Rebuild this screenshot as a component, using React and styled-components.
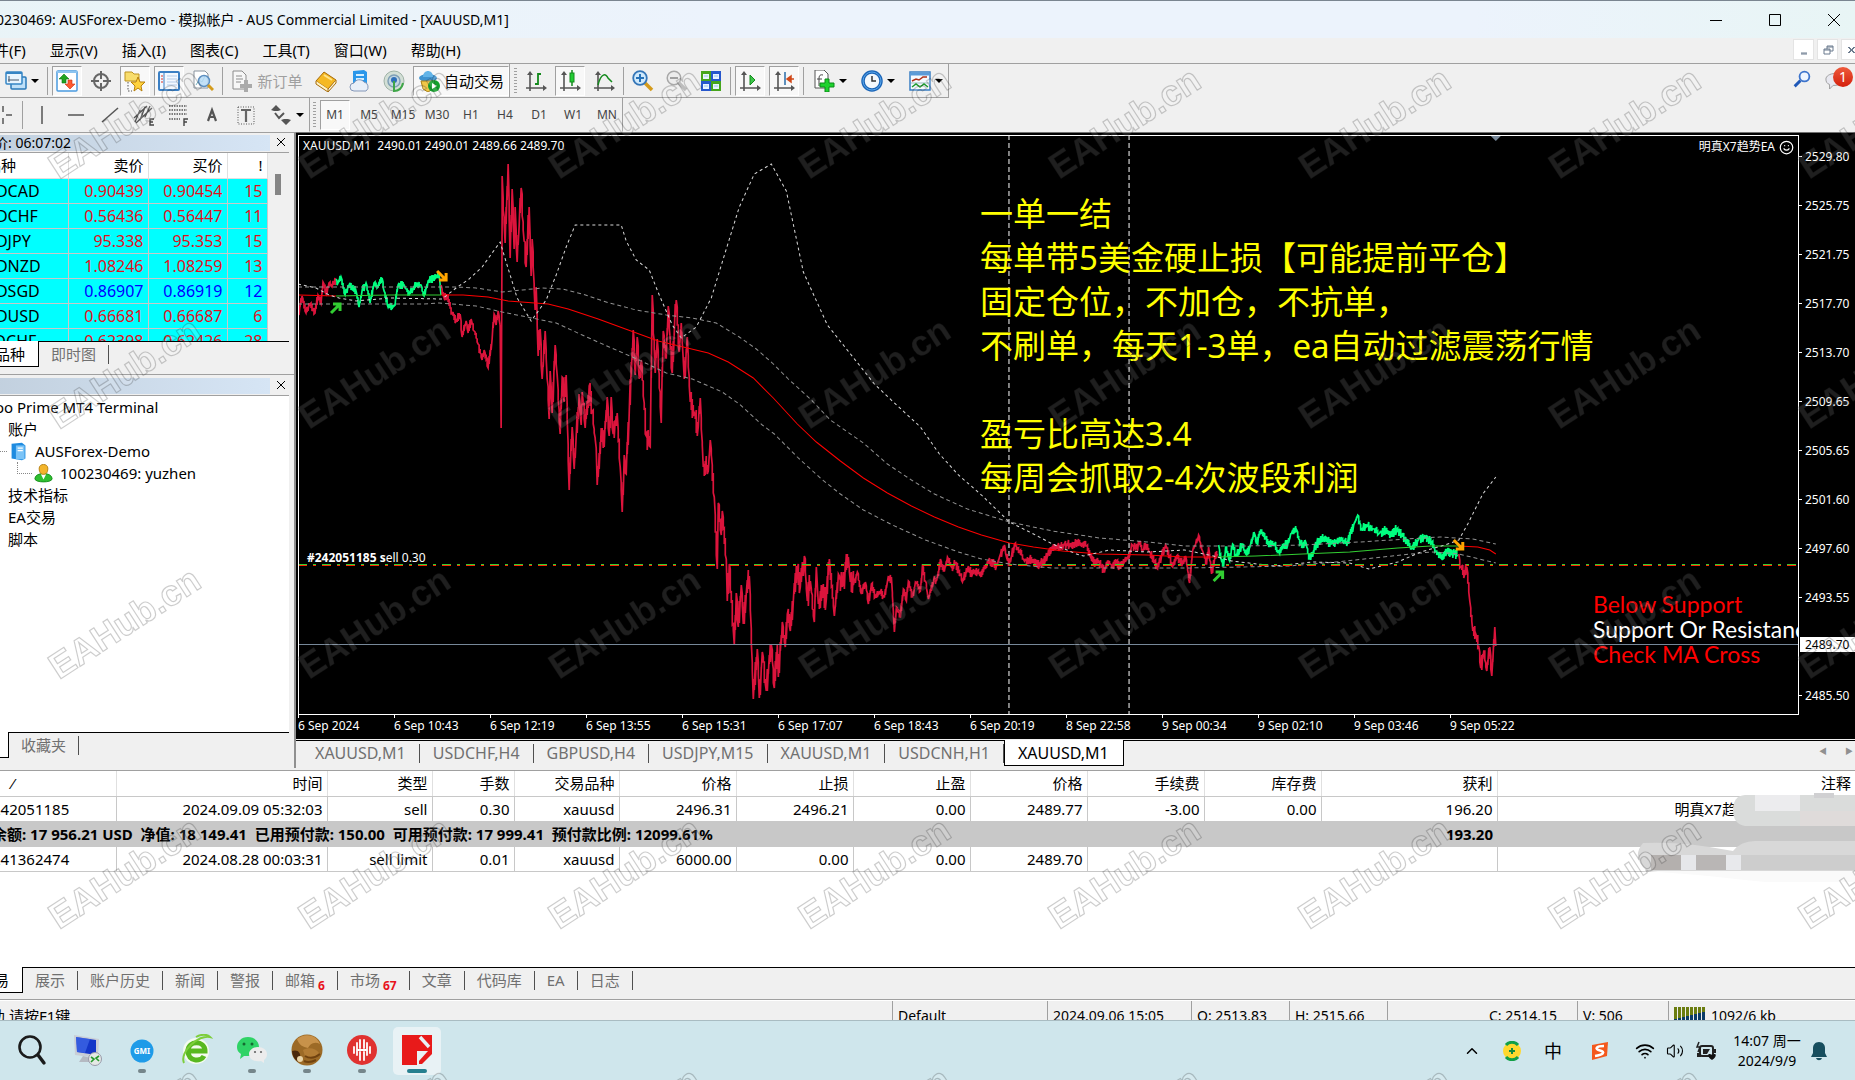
import * as React from "react";
import styled, { createGlobalStyle, css } from "styled-components";
import { Smile, Wifi, Volume2, ChevronUp } from "lucide-react";

const GlobalStyle = createGlobalStyle`
  * {
    box-sizing: border-box;
  }

  body {
    margin: 0;
    overflow: hidden;
    font-family: "Noto Sans", "Noto Sans CJK SC", sans-serif;
    font-size: 15px;
    line-height: 20px;
    color: #000;
  }

  button {
    font: inherit;
    color: inherit;
    border: 0;
    padding: 0;
    background: none;
  }
`;

const Desktop = styled.div`
  position: relative;
  display: flex;
  flex-direction: column;
  height: 100vh;
  overflow: hidden;
`;

/* the terminal window hangs over the left edge of the screen */
const Window = styled.div`
  display: flex;
  flex: 1;
  flex-direction: column;
  min-height: 0;
  margin-left: -48px;
  background: #f0f0f0;
`;

const TitleBar = styled.header`
  display: flex;
  align-items: center;
  justify-content: space-between;
  height: 38px;
  padding-left: 28px;
  border-top: 1px solid #7a8590;
  background: linear-gradient(90deg, #e9f4f7, #ecf3fc 40%, #ecf3fc 80%, #e8f5f5);
`;

const Title = styled.h1`
  margin: 0;
  font-size: 14px;
  font-weight: 400;
  white-space: nowrap;
`;

const WindowButtons = styled.div`
  display: flex;
  gap: 17px;

  & button {
    width: 42px;
    height: 36px;
  }

  & svg {
    display: block;
    margin: auto;
  }
`;

const MenuBar = styled.nav`
  display: flex;
  align-items: center;
  height: 26px;
  padding: 0 0 2px 15px;
  border-bottom: 1px solid #a0a0a0;
`;

const MenuItem = styled.button`
  padding: 0 12px;
  white-space: nowrap;
`;

const MdiButtons = styled.div`
  display: flex;
  gap: 3px;
  margin-left: auto;
  margin-right: -7px;

  & button {
    width: 21px;
    height: 21px;
    border: 1px solid #e4e4e4;
    background: #fff;
    color: #6b7b8e;
  }

  & svg {
    display: block;
    margin: auto;
  }
`;

const ToolRow = styled.div`
  display: flex;
  justify-content: space-between;
  height: 34px;
`;

const ToolGroup = styled.div`
  display: flex;
  align-items: center;
  gap: 4px;
  height: 34px;
  padding-left: ${(p) => p.$start ?? 0}px;
  border-right: 1px solid #a0a0a0;
  border-bottom: 1px solid ${(p) => (p.$underline ? "#a0a0a0" : "transparent")};
`;

const ToolGroups = styled.div`
  display: flex;
`;

const ToolButton = styled.button`
  display: flex;
  flex: none;
  align-items: center;
  justify-content: center;
  gap: 4px;
  width: ${(p) => p.$w ?? 30}px;
  height: 30px;
  white-space: nowrap;
  ${(p) =>
    p.$on &&
    css`
      border: 1px solid #a0a0a0;
      border-right-color: #fff;
      border-bottom-color: #fff;
      background: #f8f8f8;
    `}

  &:disabled {
    color: #a0a0a0;
  }
`;

const PeriodButton = styled(ToolButton)`
  font-size: 12px;
  color: #444;
`;

const Separator = styled.span`
  flex: none;
  width: 1px;
  height: 28px;
  background: #a0a0a0;
`;

const Grip = styled.span`
  flex: none;
  width: 3px;
  height: 26px;
  background: repeating-linear-gradient(#a0a0a0 0 1px, transparent 1px 3px);
`;

const Caret = styled.span`
  border: 4px solid transparent;
  border-top-color: #000;
  border-bottom: 0;
`;

const ToolRight = styled.div`
  display: flex;
  align-items: center;
  gap: 14px;
  padding-right: 10px;

  & button {
    position: relative;
    height: 24px;
  }
`;

const Badge = styled.span`
  position: absolute;
  left: 8px;
  top: -2px;
  width: 20px;
  height: 20px;
  border-radius: 50%;
  background: linear-gradient(#ee5a3c, #d4200c);
  color: #fff;
  font-size: 14px;
`;

const Workspace = styled.main`
  display: flex;
  flex: 1;
  min-height: 0;
`;

const Sidebar = styled.aside`
  display: flex;
  flex: none;
  flex-direction: column;
  width: 344px;
  padding: 2px 0 10px;
  border-top: 1px solid #a0a0a0;
  border-right: 2px solid #909090;
`;

const Panel = styled.section`
  display: flex;
  flex-direction: column;
  width: 337px;
  flex: ${(p) => (p.$grow ? "1" : "none")};
  min-height: 0;
`;

const PanelCaption = styled.h2`
  display: flex;
  justify-content: space-between;
  height: 18px;
  margin: 0;
  border-bottom: 1px solid #a0a0a0;
  font-size: 14px;
  font-weight: 400;
  line-height: 16px;

  & span {
    width: 318px;
    height: 16px;
    background: linear-gradient(90deg, #bfcddb, #d6e5f5);
  }

  & button {
    width: 16px;
  }
`;

const PanelDivider = styled.div`
  flex: none;
  height: 8px;
  border-bottom: 1px solid #a0a0a0;
  margin-bottom: 3px;
`;

const QuoteList = styled.div`
  display: flex;
  height: 188px;
  overflow: hidden;
`;

const QuoteTable = styled.table`
  width: 315px;
  table-layout: fixed;
  border-collapse: collapse;
  background: #fff;

  & th,
  & td {
    height: 25px;
    padding: 0 4px;
    border: 0 solid #c8c8c8;
    border-right-width: 1px;
    border-bottom-width: 1px;
    font-weight: 400;
    text-align: right;
    white-space: nowrap;
  }

  & td {
    font-size: 16px;
  }

  & th {
    border-color: #e0e0e0;
  }

  & th:first-child {
    text-align: left;
  }

  & td:first-child {
    padding-left: 22px;
    text-align: left;
    color: #000;
  }
`;

const QuoteRow = styled.tr`
  background: #00ffff;
  color: ${(p) => (p.$up ? "#0000ff" : "#e0101c")};
`;

const ScrollTrack = styled.div`
  flex: 1;
  padding: 21px 7px 0;
  background: #f0f0f0;

  &:before {
    content: "";
    display: block;
    width: 6px;
    height: 21px;
    background: #858585;
  }
`;

const TabStrip = styled.div`
  display: flex;
  flex: none;
  height: 26px;
  padding-left: ${(p) => p.$start ?? 0}px;
  border-top: ${(p) => (p.$double ? "3px double" : "1px solid")} #000;
`;

const Tab = styled.button`
  flex: none;
  height: 24px;
  padding: 0 13px 0 12px;
  color: #707070;
  line-height: 20px;
  white-space: nowrap;
  background: linear-gradient(#505050, #505050) right 3px / 1px 19px no-repeat;
  ${(p) =>
    p.$wide &&
    css`
      padding: 0 14px 0 13px;
      font-size: 16px;
    `}
  ${(p) =>
    p.$active &&
    css`
      margin-top: -1px;
      height: 26px;
      border: 1px solid #000;
      border-top: 0;
      background: #fff;
      color: #000;
    `}

  & sub {
    margin-left: 3px;
    color: #e8141c;
    font-size: 12px;
    font-weight: 700;
    line-height: 10px;
  }
`;

const Tree = styled.ul`
  flex: 1;
  margin: 0;
  padding: 0 0 0 32px;
  list-style: none;
  overflow: hidden;
  background: #fff;
`;

const TreeItem = styled.li`
  position: relative;
  display: flex;
  align-items: center;
  gap: ${(p) => (p.$depth ? 7 : 8)}px;
  height: 22px;
  padding-left: ${(p) => (p.$depth ?? 0) * 25}px;
  white-space: nowrap;
  ${(p) =>
    p.$depth &&
    css`
      &:before {
        content: "";
        position: absolute;
        left: ${(p.$depth - 1) * 25 + 8}px;
        top: 0;
        width: 14px;
        height: 11px;
        border: 1px dotted #888;
        border-width: 0 0 1px 1px;
      }
    `}
`;

const ChartColumn = styled.section`
  display: flex;
  flex: 1;
  flex-direction: column;
  min-width: 0;
`;

const ChartArea = styled.div`
  display: grid;
  flex: 1;
  grid-template-columns: minmax(0, 1fr) 56px;
  grid-template-rows: minmax(0, 1fr) 23px;
  min-height: 0;
  padding: 2px 0 0 2px;
  border-top: 1px solid #707070;
  background: #000;
  color: #fff;
  font-size: 12px;
`;

const Plot = styled.div`
  position: relative;
  border: 1px solid #fff;
  overflow: hidden;

  & > svg {
    display: block;
    width: 100%;
    height: 100%;
  }
`;

const PlotLabel = styled.div`
  position: absolute;
  display: flex;
  align-items: center;
  gap: 4px;
  line-height: 16px;
  white-space: pre;
`;

const OhlcLabel = styled(PlotLabel)`
  left: 4px;
  top: 2px;
`;

const ExpertLabel = styled(PlotLabel)`
  right: 4px;
  top: 3px;
`;

const OrderLabel = styled(PlotLabel)`
  left: 8px;
  top: 414px;
  gap: 0;
`;

const Notes = styled.div`
  position: absolute;
  left: 681px;
  top: 56px;
  color: #ffff00;
  font-size: 33px;
  line-height: 44px;
  white-space: pre;
`;

const Signals = styled.div`
  position: absolute;
  left: 1294px;
  top: 456px;
  font-family: Lato, sans-serif;
  font-size: 23px;
  line-height: 25px;
  color: #ff0000;
  white-space: nowrap;

  & p {
    margin: 0;
  }

  & p:nth-child(2) {
    color: #fff;
  }
`;

const PriceAxis = styled.div`
  overflow: hidden;
`;

const Price = styled.div`
  display: flex;
  align-items: center;
  height: 49px;

  &:first-child {
    height: 46px;
    padding-bottom: 3px;
  }

  &:before {
    content: "";
    width: 3px;
    height: 1px;
    margin-right: 3px;
    background: #fff;
  }
`;

const PriceNow = styled(Price)`
  align-items: flex-start;
  padding-top: 15px;

  &:before {
    display: none;
  }

  & span {
    width: 100%;
    margin-left: 1px;
    padding-left: 5px;
    background: #fff;
    color: #000;
    line-height: 15px;
  }
`;

const TimeAxis = styled.div`
  display: flex;
  grid-column: 1 / -1;
  overflow: hidden;
`;

const Time = styled.div`
  flex: none;
  width: 96px;
  line-height: 16px;
  white-space: nowrap;

  &:before {
    content: "";
    display: block;
    width: 1px;
    height: 3px;
    background: #fff;
  }
`;

const ChartTabs = styled.div`
  position: relative;
  height: 30px;
`;

const TabScroll = styled.div`
  position: absolute;
  right: 2px;
  top: 3px;
  display: flex;
  gap: 18px;
  color: #909090;
  font-size: 8px;
`;

const Terminal = styled.section`
  display: flex;
  flex: none;
  flex-direction: column;
  height: 232px;
  padding: 2px 0 6px;
  border-bottom: 1px solid #a0a0a0;
`;

const OrderArea = styled.div`
  position: relative;
  flex: 1;
  border-top: 1px solid #a0a0a0;
  background: #fff;
`;

const OrderTable = styled.table`
  width: 100%;
  table-layout: fixed;
  border-collapse: collapse;

  & th,
  & td {
    height: 25px;
    padding: 0 4px;
    border: 0 solid #c8c8c8;
    border-right-width: 1px;
    border-bottom-width: 1px;
    font-weight: 400;
    text-align: right;
    white-space: nowrap;
  }

  & th {
    border-right-color: #e0e0e0;
  }

  & th:first-child {
    padding-left: 18px;
    text-align: left;
    white-space: pre;
  }

  & td:first-child {
    padding-left: 40px;
    text-align: left;
  }

  & th:last-child,
  & td:last-child {
    border-right: 0;
  }
`;

const BalanceRow = styled.tr`
  background: #c8c8c8;

  & td {
    border-right: 0;
    font-weight: 700;
    white-space: pre;
  }
`;

const Redaction = styled.svg`
  position: absolute;
  right: 0;
  top: 21px;
`;

const StatusBar = styled.footer`
  display: flex;
  flex: none;
  height: 20px;
  border-top: 1px solid #fff;
  overflow: hidden;
  line-height: 30px;
`;

const StatusCell = styled.div`
  display: flex;
  flex: ${(p) => (p.$w ? "none" : "1")};
  width: ${(p) => p.$w}px;
  gap: 5px;
  justify-content: ${(p) => (p.$end ? "flex-end" : "flex-start")};
  padding: 0 ${(p) => (p.$end ? 20 : 5)}px;
  border-left: 1px solid #a0a0a0;
  font-size: 14px;
  white-space: nowrap;

  &:first-child {
    padding-left: 23px;
    border: 0;
    font-size: 15px;
  }
`;

const Taskbar = styled.nav`
  display: flex;
  flex: none;
  align-items: center;
  justify-content: space-between;
  height: 60px;
  padding: 0 26px 0 8px;
  border-top: 1px solid #a9bcc2;
  background: #cfe6ec;
`;

const AppList = styled.div`
  display: flex;
  gap: 7px;
`;

const AppButton = styled.button`
  display: flex;
  flex-direction: column;
  align-items: center;
  width: 48px;
  height: 48px;
  padding-top: 7px;
  border-radius: 5px;
  background: ${(p) => (p.$active ? "#e8f2f5" : "none")};

  &:after {
    content: "";
    width: ${(p) => (p.$active ? 20 : 8)}px;
    height: 4px;
    margin-top: 3px;
    border-radius: 2px;
    background: ${(p) => (p.$active ? "#26808f" : p.$running ? "#75868b" : "none")};
  }
`;

const Tray = styled.div`
  display: flex;
  align-items: center;
`;

const TrayButton = styled.button`
  display: flex;
  align-items: center;
  justify-content: center;
  width: ${(p) => p.$w ?? 30}px;
  height: 40px;
  font-size: 18px;
`;

const Clock = styled.div`
  width: 84px;
  font-size: 14px;
  line-height: 20px;
  text-align: center;
  white-space: nowrap;
`;

const Watermark = styled.svg`
  position: absolute;
  left: 0;
  top: 0;
  width: 100%;
  height: 100%;
  pointer-events: none;
`;

/* ---------- icons ---------- */

const Icon = ({ size = 22, children }) => (
  <svg width={size} height={size} viewBox="0 0 22 22" fill="none" aria-hidden="true">
    {children}
  </svg>
);

const Axes = ({ children }) => (
  <Icon>
    <path d="M5 3v18M1 18h18" stroke="#555" strokeWidth="1.6" />
    <path d="M2 5l3-4 3 4zM18 15l4 3-4 3z" fill="#555" />
    {children}
  </Icon>
);

const icons = {
  profiles: (
    <Icon>
      <rect x="6" y="7" width="15" height="12" rx="1" fill="#bfe0f8" stroke="#2a78b8" strokeWidth="1.5" />
      <rect x="1" y="2" width="16" height="12" rx="1" fill="#e8f5ff" stroke="#3585c5" strokeWidth="1.5" />
      <path d="M1 3h16" stroke="#3585c5" strokeWidth="2" />
      <path d="M4 6v6M3 10h11" stroke="#456" />
    </Icon>
  ),
  market: (
    <Icon>
      <rect x="1" y="1" width="20" height="20" rx="1" fill="#fff" stroke="#4a9be0" strokeWidth="1.5" />
      <path d="M1 2h20" stroke="#8cc4f0" strokeWidth="2" />
      <path d="M3 9l5-5 5 5h-3v4H6V9z" fill="#21a321" stroke="#0b7a12" strokeWidth=".6" />
      <path d="M9 14l5 5 5-5h-3v-4h-4v4z" fill="#ff5a30" stroke="#c83010" strokeWidth=".6" />
    </Icon>
  ),
  target: (
    <Icon>
      <circle cx="11" cy="11" r="7" stroke="#666" strokeWidth="2" />
      <path d="M11 1v8M11 13v8M1 11h8M13 11h8" stroke="#666" strokeWidth="2" />
    </Icon>
  ),
  navigator: (
    <Icon>
      <path d="M1 4V2h7l2 2h5v7H1z" fill="#f8dd6c" stroke="#bd9320" />
      <path d="M4 12v9h4" stroke="#555" strokeDasharray="1.5 1.5" />
      <path d="M14 7l2 5 5 0-4 4 1 5-4-3-4 3 1-5-4-4h5z" fill="#ffd23c" stroke="#b8800c" />
    </Icon>
  ),
  terminal: (
    <Icon>
      <rect x="1" y="2" width="20" height="18" rx="1" fill="#f2f8ff" stroke="#3a7fc4" strokeWidth="2" />
      <path d="M6 3v16" stroke="#3a7fc4" />
      <path d="M3 6h2M3 9h2M3 12h2" stroke="#e03020" />
      <path d="M9 6h10M9 9h10M9 12h10M9 15h10" stroke="#b4cbe8" />
    </Icon>
  ),
  tester: (
    <Icon>
      <path d="M2 1h11l3 3v14H2z" fill="#fff" stroke="#8a949e" />
      <path d="M4 15l3-5 3 2 3-6" stroke="#6ab" />
      <circle cx="12" cy="11" r="5.5" fill="#b9dcf6" fillOpacity=".85" stroke="#5d8fc0" strokeWidth="1.5" />
      <path d="M16 15l5 5" stroke="#d49b1c" strokeWidth="3" />
    </Icon>
  ),
  order: (
    <Icon>
      <path d="M2 1h9l4 4v14H2z" fill="#f7f7f7" stroke="#8c8c8c" />
      <path d="M5 6h6M5 9h7M5 12h5" stroke="#8c8c8c" />
      <path d="M13 10h4v4h4v4h-4v4h-4v-4H9v-4h4z" fill="#aaa" />
    </Icon>
  ),
  book: (
    <Icon>
      <path d="M9 2l12 8-8 9L1 11z" fill="#f5b923" stroke="#a66a08" />
      <path d="M1 11v3l12 8v-3M13 22l8-9v-3" fill="#fff3c4" stroke="#a66a08" />
      <path d="M9 5l8 5" stroke="#ffe48a" strokeWidth="2" />
    </Icon>
  ),
  cloud: (
    <Icon>
      <path d="M4 1l11-1 3 2v13H4z" fill="#2a97ea" />
      <path d="M7 4h8v2H7zM7 8h8v2H7z" fill="#d5efff" />
      <path d="M5 21a4 4 0 010-8 6 6 0 0110-1 5 5 0 012 9z" fill="#e9eff8" stroke="#8497b8" />
    </Icon>
  ),
  signal: (
    <Icon>
      <circle cx="11" cy="11" r="10" fill="#d3dfd6" stroke="#9fb2a6" />
      <circle cx="11" cy="11" r="6" fill="#c2d6e2" stroke="#7f9fb5" strokeWidth="1.5" />
      <circle cx="11" cy="10" r="3" fill="#2f6fb8" />
      <path d="M11 11v10c5 0 8-3 9-8" stroke="#3fa648" strokeWidth="2" />
    </Icon>
  ),
  expert: (
    <Icon>
      <ellipse cx="10" cy="8" rx="9" ry="4" fill="#3f93d0" />
      <path d="M5 7c0-8 10-8 10 0z" fill="#62b4e8" />
      <path d="M3 11h14l-2 8-5 3-5-3z" fill="#f0c748" stroke="#a88018" />
      <circle cx="16" cy="16" r="6" fill="#13a02c" />
      <path d="M14 13l5 3-5 3z" fill="#fff" />
    </Icon>
  ),
  bars: (
    <Axes>
      <path d="M13 3v12M13 4h3M10 14h3" stroke="#138a1c" strokeWidth="1.8" />
    </Axes>
  ),
  candles: (
    <Axes>
      <path d="M13 0v16" stroke="#138a1c" strokeWidth="1.5" />
      <rect x="11" y="3" width="4" height="9" fill="#22cc33" stroke="#138a1c" />
    </Axes>
  ),
  line: (
    <Axes>
      <path d="M5 15C8 3 13 3 15 8l4 4" stroke="#138a1c" strokeWidth="1.5" />
    </Axes>
  ),
  zoomIn: (
    <Icon>
      <path d="M13 13l7 7" stroke="#d49b1c" strokeWidth="3.5" />
      <circle cx="8" cy="8" r="6.8" fill="#cfe9fc" stroke="#3476b8" strokeWidth="1.8" />
      <path d="M4 8h8M8 4v8" stroke="#2672b8" strokeWidth="2" />
    </Icon>
  ),
  zoomOut: (
    <Icon>
      <path d="M13 13l7 7" stroke="#b4b4b4" strokeWidth="3.5" />
      <circle cx="8" cy="8" r="6.8" fill="#ececec" stroke="#a8a8a8" strokeWidth="1.5" />
      <path d="M4 8h8" stroke="#a0a0a0" strokeWidth="2" />
    </Icon>
  ),
  tiles: (
    <Icon>
      <path d="M1 1h10v10H1zM11 11h10v10H11z" fill="#46a51c" />
      <path d="M11 1h10v10H11zM1 11h10v10H1z" fill="#2757cc" />
      <path d="M3 4h6v5H3zM13 4h6v5h-6zM3 14h6v5H3zM13 14h6v5h-6z" fill="#e8f4ff" />
      <path d="M4 6h4M14 6h4M4 16h4M14 16h4" stroke="#9cc4e8" />
    </Icon>
  ),
  scroll: (
    <Axes>
      <path d="M11 5l5 5-5 5z" fill="#3dc64a" stroke="#138a1c" />
    </Axes>
  ),
  shift: (
    <Axes>
      <path d="M12 2v13" stroke="#2a6ca8" strokeWidth="1.5" />
      <path d="M21 9h-4M18 6l-4 3 4 3z" fill="#d04818" stroke="#d04818" strokeWidth="1.5" />
    </Axes>
  ),
  indicator: (
    <Icon>
      <path d="M2 0h9l4 4v14H2z" fill="#fff" stroke="#555" />
      <path d="M10 5c-4-1-4 2-4 5v6M4 9h5" stroke="#444" />
      <path d="M12 9h4v4h5v4h-5v5h-4v-5H7v-4h5z" fill="#1ed32e" stroke="#0b8a18" />
    </Icon>
  ),
  clock: (
    <Icon>
      <circle cx="11" cy="11" r="9" fill="#f4f8fc" stroke="#1c66b8" strokeWidth="3.5" />
      <circle cx="11" cy="11" r="9" stroke="#5ca8ec" />
      <path d="M11 6v5h4" stroke="#333" strokeWidth="1.5" />
    </Icon>
  ),
  template: (
    <Icon>
      <rect x="1" y="2" width="20" height="18" fill="#f5faff" stroke="#3a7fc4" strokeWidth="1.5" />
      <path d="M1 4h20" stroke="#5b9bd8" strokeWidth="3" />
      <path d="M3 11l4-2 3 1 4-3h4" stroke="#b03018" strokeWidth="1.5" />
      <path d="M2 13h18" stroke="#9bb" />
      <path d="M3 17l4-3 4 3 4-3 4 3" stroke="#1c9a2c" strokeWidth="1.5" />
    </Icon>
  ),
  cross: (
    <Icon>
      <path d="M11 2v6M11 14v6M2 11h6M14 11h6" stroke="#555" strokeWidth="1.5" />
    </Icon>
  ),
  vline: (
    <Icon>
      <path d="M11 2v18" stroke="#555" strokeWidth="1.5" />
    </Icon>
  ),
  hline: (
    <Icon>
      <path d="M3 11h16" stroke="#555" strokeWidth="1.5" />
    </Icon>
  ),
  trend: (
    <Icon>
      <path d="M3 18L19 4" stroke="#555" strokeWidth="1.5" />
    </Icon>
  ),
  channel: (
    <Icon>
      <path d="M1 14L14 2M3 19L19 4M2 18L7 6M7 16l5-13M12 13l5-11" stroke="#555" strokeWidth="1.4" />
      <path d="M21 15h-4v6h4M17 18h3" stroke="#444" strokeWidth="1.4" />
    </Icon>
  ),
  fibo: (
    <Icon>
      <path d="M2 2h18M2 6h18M2 10h18M2 15h11" stroke="#555" strokeWidth="1.4" strokeDasharray="1.5 1" />
      <path d="M21 15h-4v7M17 18h3" stroke="#444" strokeWidth="1.4" />
    </Icon>
  ),
  letter: (
    <Icon>
      <path d="M7 17l4-11 4 11M8 13h6" stroke="#555" strokeWidth="2.2" />
    </Icon>
  ),
  label: (
    <Icon>
      <rect x="3" y="3" width="16" height="17" stroke="#555" strokeDasharray="1 1.5" />
      <path d="M6 6h10M11 6v12" stroke="#666" strokeWidth="2.2" />
    </Icon>
  ),
  arrows: (
    <Icon>
      <path d="M6 1l5 5-3 1H4L1 6zM16 21l-5-5 3-1h4l3 1z" fill="#555" />
      <path d="M5 9l4 5 5-5" stroke="#555" strokeWidth="2" />
    </Icon>
  ),
  search: (
    <Icon size={18}>
      <path d="M9 13l-7 7" stroke="#1f58b8" strokeWidth="3.5" />
      <circle cx="14" cy="8" r="6" fill="#eef5ff" stroke="#3d74cc" strokeWidth="2.2" />
    </Icon>
  ),
  chat: (
    <Icon size={20}>
      <path d="M11 5c6 0 10 3 10 6s-4 7-10 7H9l-4 4v-5c-3-1-4-3-4-6 0-3 4-6 10-6z" fill="#e8e8f0" stroke="#999" />
    </Icon>
  ),
  server: (
    <Icon size={19}>
      <path d="M3 2l12-1 4 3v15l-4 2-12-2z" fill="#1e8be0" />
      <path d="M8 4h10v16H8z" fill="#7cc4f7" />
      <path d="M10 7h6M10 10h6" stroke="#fff" strokeWidth="1.5" />
    </Icon>
  ),
  user: (
    <Icon size={19}>
      <path d="M1 17c0-8 20-8 20 0 0 5-20 5-20 0z" fill="#2fbf30" stroke="#128a18" />
      <path d="M8 12l3 6 3-6z" fill="#fff" />
      <path d="M6 5c0-6 10-6 10 0s-3 7-5 7-5-1-5-7z" fill="#f3b52c" stroke="#b07808" />
    </Icon>
  ),
  folder: (
    <Icon size={16}>
      <path d="M1 5h7l2 2h11v12H1z" fill="#e8c13c" stroke="#a88018" />
    </Icon>
  ),
};

const WinIcon = ({ d, size = 14 }) => (
  <svg width={size} height={size} viewBox="0 0 14 14" fill="none" stroke="currentColor" aria-hidden="true">
    <path d={d} />
  </svg>
);

const AppIcon = ({ children }) => (
  <svg width="32" height="32" viewBox="0 0 32 32" fill="none" aria-hidden="true">
    {children}
  </svg>
);

const apps = [
  {
    name: "Search",
    icon: (
      <AppIcon>
        <circle cx="14" cy="13" r="10.5" stroke="#1b1b1b" strokeWidth="2.6" />
        <path d="M22 21l6 8" stroke="#1b1b1b" strokeWidth="3.4" strokeLinecap="round" />
      </AppIcon>
    ),
  },
  {
    name: "Remote Desktop",
    icon: (
      <AppIcon>
        <path d="M3 1l25 4-1 19-23-3z" fill="#c9ced6" />
        <path d="M5 3l20 3v15L6 18z" fill="#1436c8" />
        <path d="M5 3l14 2-5 14-8-1z" fill="#4a74ee" fillOpacity=".6" />
        <path d="M12 22l8 2-1 4H8z" fill="#b5bac2" />
        <circle cx="24" cy="25" r="6.5" fill="#e4e9e4" stroke="#99a" />
        <path d="M20 23l3 2-3 3M28 22l-3 2 3 3" stroke="#259a2c" strokeWidth="1.6" />
      </AppIcon>
    ),
  },
  {
    name: "GMI",
    running: true,
    icon: (
      <AppIcon>
        <circle cx="16" cy="17" r="11.5" fill="#1f9be8" />
        <text x="16" y="20" textAnchor="middle" fontSize="8" fontWeight="700" fill="#fff">GMI</text>
      </AppIcon>
    ),
  },
  {
    name: "Browser",
    icon: (
      <AppIcon>
        <circle cx="15" cy="17" r="13" fill="#f4fbef" />
        <path d="M7 17h17c0-11-17-11-17 0 0 11 13 11 16 5" stroke="#58b820" strokeWidth="5" />
        <path d="M3 29C-2 18 18 0 29 3c-3-3-9-3-14 0" stroke="#7dce3c" strokeWidth="2" />
      </AppIcon>
    ),
  },
  {
    name: "WeChat",
    running: true,
    icon: (
      <AppIcon>
        <path d="M12 3c7 0 11 5 11 10s-4 9-11 9H8l-4 3 1-5c-3-2-4-4-4-7C1 8 5 3 12 3z" fill="#2fd366" />
        <circle cx="8" cy="10" r="1.5" fill="#156a30" />
        <circle cx="16" cy="10" r="1.5" fill="#156a30" />
        <path d="M22 13c5 0 9 3 9 7 0 3-1 4-3 6v3l-3-2c-7 1-12-2-12-7 0-4 4-7 9-7z" fill="#ececec" />
        <circle cx="19" cy="18" r="1.1" fill="#666" />
        <circle cx="25" cy="18" r="1.1" fill="#666" />
      </AppIcon>
    ),
  },
  {
    name: "Game",
    running: true,
    icon: (
      <AppIcon>
        <circle cx="16" cy="16" r="15.5" fill="#9c6a26" />
        <path d="M6 5c8-7 20-4 23 5-6-3-10 0-12 4-5-1-9-3-11-9z" fill="#c8924a" />
        <path d="M1 17c6-2 9 2 8 7l-2 4c-4-3-6-7-6-11z" fill="#4a280c" />
        <path d="M12 16c5-3 13-2 16 3-3 6-11 7-14 3z" fill="#b27c34" />
        <path d="M14 22c5 3 10 2 15-2M13 27c4 2 8 1 12-1" stroke="#70420f" strokeWidth="2" />
        <circle cx="9" cy="25" r="3" fill="#e8d4a8" />
      </AppIcon>
    ),
  },
  {
    name: "Trading",
    running: true,
    icon: (
      <AppIcon>
        <circle cx="16" cy="16" r="15" fill="#e03230" />
        <path
          d="M8 13v6M11 9v12M21 9v12M24 13v6M14 6v8M14 18v8M18 6v8M18 18v8M11 16h10"
          stroke="#fff"
          strokeWidth="1.8"
          strokeLinecap="round"
        />
      </AppIcon>
    ),
  },
  {
    name: "MetaTrader",
    active: true,
    icon: (
      <AppIcon>
        <path d="M1 1h30v30H1z" fill="#e81a1a" />
        <path d="M16 17h15v14H16z" fill="#e8f2f5" />
        <path d="M19 3l9 10" stroke="#e8f2f5" strokeWidth="3.4" />
        <path d="M18 27l9-10h4v3L21 30h-3z" fill="#e81a1a" />
      </AppIcon>
    ),
  },
];

/* ---------- data ---------- */

const quotes = [
  ["AUDCAD", "0.90439", "0.90454", 15],
  ["AUDCHF", "0.56436", "0.56447", 11],
  ["AUDJPY", "95.338", "95.353", 15],
  ["AUDNZD", "1.08246", "1.08259", 13],
  ["AUDSGD", "0.86907", "0.86919", 12, true],
  ["AUDUSD", "0.66681", "0.66687", 6],
  ["CADCHF", "0.62398", "0.62426", 28],
];

const prices = ["2529.80", "2525.75", "2521.75", "2517.70", "2513.70", "2509.65", "2505.65", "2501.60", "2497.60", "2493.55"];

const times = [
  "6 Sep 2024", "6 Sep 10:43", "6 Sep 12:19", "6 Sep 13:55", "6 Sep 15:31", "6 Sep 17:07", "6 Sep 18:43",
  "6 Sep 20:19", "8 Sep 22:58", "9 Sep 00:34", "9 Sep 02:10", "9 Sep 03:46", "9 Sep 05:22",
];

const chartTabs = ["XAUUSD,M1", "USDCHF,H4", "GBPUSD,H4", "USDJPY,M15", "XAUUSD,M1", "USDCNH,H1", "XAUUSD,M1"];

const terminalTabs = [
  ["交易"], ["展示"], ["账户历史"], ["新闻"], ["警报"], ["邮箱", 6], ["市场", 67], ["文章"], ["代码库"], ["EA"], ["日志"],
];

const columns = [
  ["订单   ⁄", 164], ["时间", 211], ["类型", 105], ["手数", 82], ["交易品种", 105], ["价格", 117], ["止损", 117],
  ["止盈", 117], ["价格", 117], ["手续费", 117], ["库存费", 117], ["获利", 176], ["注释"],
];

const notes = `一单一结
每单带5美金硬止损【可能提前平仓】
固定仓位，不加仓，不抗单，
不刷单，每天1-3单，ea自动过滤震荡行情

盈亏比高达3.4
每周会抓取2-4次波段利润`;

// turning points of the price, x y pairs in plot units
const fallA = "0 182 4 161 8 178 12 169 17 178 20 160 23 169 25 147 28 159 31 148 34 152 38 144";
const riseA =
  "38 144 40 148 43 142 47 160 51 150 58 156 61 172 64 156 68 148 72 168 76 148 80 152 84 143 86 156 90 172 97 170 100 150 106 150 111 160 118 148 123 150 126 161 130 146 138 142 141 140 143 160";
const fallB =
  "143 150 146 163 149 160 154 179 158 186 162 179 164 202 168 186 170 198 173 184 176 196 180 209 184 225 186 215 190 233 194 204 196 179 198 190 200 176 202 190";
const spike =
  "202 190 203 293 204 83 204 41 207 108 210 29 212 123 214 54 216 114 217 72 219 127 221 91 223 53 226 106 228 132 231 72 233 141 234 104 237 175 238 152 240 221 242 194 244 244 247 196 249 244 251 284 252 236 254 278 257 210 259 240 262 299 264 242 266 267 268 240 271 355 274 292 276 334 278 301 281 259 283 290 284 257 287 293 291 251 294 276 298 313 299 350 304 293 305 313 309 262 311 301 313 262 315 299 319 278 322 332 324 377 326 320 328 339 331 278 335 195 337 240 339 202 341 244 343 225 348 301 352 312 354 160 357 238 359 204 363 288 365 196 368 223 370 171 374 238 376 198 378 165 381 217 383 188 386 244 389 202 392 267 396 278 400 292 402 263 405 332 410 336 412 305 416 362 419 434 420 368 423 400 424 376 428 424 429 466 431 429 436 510 438 458 440 492 443 450 445 489 448 458 451 441 455 564 459 514 461 563 464 517 468 556 473 510 476 553 479 510 480 542 484 487 487 512 489 479 492 496 495 466 499 434 502 452 506 421 509 466 512 446 516 487 518 432 520 469 524 456 528 464 531 424 536 481 540 439 544 452 550 422 552 447 556 446";
const calm =
  "556 446 559 437 563 459 567 447 570 469 573 449 577 462 582 457 586 462 589 447 593 442 596 497 598 472 602 482 605 454 608 466 610 446 614 462 617 447 622 456 624 431 627 446 630 464 635 447 639 442 642 424 646 436 649 422 653 432 657 429 662 439 664 447 669 434 674 439 679 436 682 441 690 426 698 431 701 422 706 410 708 422 711 429 716 409 721 416 726 426 731 425 735 426 741 430 747 424 753 414 761 412 768 409 773 412 779 407 788 411 792 422 797 429 800 426 806 437 809 426 814 431 818 426 821 432 826 426 831 421 833 409 837 414 841 408 844 416 847 409 851 417 856 426 859 434 863 421 867 410 871 421 874 432 878 421 884 429 887 421 891 448 894 416 897 409 900 400 904 416 908 429 910 412 913 439 916 424 919 419";
const riseB =
  "920 410 923 426 925 431 927 412 931 426 934 409 937 421 941 416 943 409 948 420 952 409 956 399 958 409 962 395 967 404 971 410 976 409 981 419 985 409 989 410 992 399 998 395 1002 409 1007 407 1011 424 1018 409 1025 403 1033 409 1042 405 1049 407 1055 390 1059 380 1063 395 1068 390 1075 394 1080 399 1087 395 1092 400 1098 394 1106 404 1113 414 1120 404 1127 403 1133 407 1137 416 1143 424 1148 417 1159 420";
const fallC =
  "1160 419 1162 432 1166 439 1168 432 1171 466 1174 496 1177 499 1180 512 1182 533 1185 516 1188 536 1191 512 1193 541 1196 492 1197 511";

const fastLine =
  "0 149 18 153 31 160 41 163 58 166 91 163 144 164 158 153 171 144 184 132 194 118 202 107 208 127 219 163 233 186 248 165 258 140 268 112 277 90 323 90 328 106 338 125 351 135 361 160 374 190 383 203 398 192 413 163 428 114 441 72 456 39 473 29 488 56 505 137 529 190 576 249 595 267 622 292 641 319 660 340 683 360 711 387 735 399 754 409 778 419 785 421 811 415 849 417 886 415 915 421 933 426 976 431 1014 427 1051 428 1070 434 1099 427 1122 417 1146 410 1160 405 1169 389 1184 359 1197 342";
const upperBand =
  "0 152 124 152 158 152 178 153 204 157 224 155 244 153 264 154 284 159 311 168 338 175 368 180 394 183 418 188 441 202 458 214 474 228 490 244 513 265 532 285 565 308 589 329 613 345 636 359 669 374 711 387 754 396 801 403 849 407 886 411 943 411 1004 410 1061 407 1108 404 1141 402 1174 404 1197 409";
const lowerBand =
  "0 169 124 169 141 168 178 171 204 177 224 181 258 188 284 200 311 212 341 225 368 238 394 244 424 257 441 269 464 290 476 299 499 322 523 344 542 359 565 375 594 390 627 405 660 417 683 424 711 429 754 433 825 433 886 433 943 432 990 431 1037 427 1084 422 1132 417 1160 419 1197 428";
const averageDown =
  "143 160 165 160 190 162 210 166 250 169 270 174 300 184 330 195 360 206 385 212 410 218 430 227 455 243 475 263 499 289 518 307 542 326 565 343 589 358 613 371 636 382 660 392 683 400 711 408 735 412 764 416 801 419 849 420 886 422 919 422";

// fills the gaps between turning points with minute-by-minute wicks
const wicks = (points, swing) => {
  const n = points.split(" ").map(Number);
  let seed = 7;
  const rand = () => {
    seed = (seed * 16807) % 2147483647;
    return seed / 2147483647;
  };
  let d = `M${n[0]} ${n[1]}`;
  for (let i = 2; i < n.length; i += 2) {
    const [x0, y0, x1, y1] = n.slice(i - 2, i + 2);
    const steps = Math.max(1, Math.round(x1 - x0));
    for (let s = 1; s < steps; s++) {
      const x = x0 + ((x1 - x0) * s) / steps;
      const y = y0 + ((y1 - y0) * s) / steps;
      const up = rand() * swing;
      const down = rand() * swing;
      d += `L${x} ${Math.round(y - up)}V${Math.round(y + down)}`;
    }
    d += `L${x1} ${y1}`;
  }
  return d;
};

const RED = "#dc143c";
const GREEN = "#00ff7f";

const Arrow = ({ x, y, down }) => (
  <path
    d="M-5 5L3 -3M-3 -4H4V3"
    transform={`translate(${x} ${y}) rotate(${down ? 90 : 0})`}
    stroke={down ? "#ffa500" : "#32cd32"}
    strokeWidth="3"
  />
);

const ChartDrawing = () => (
  <svg viewBox="1 1 1498 578" preserveAspectRatio="none" fill="none" role="img" aria-label="XAUUSD M1">
    <path d="M710.5 0V579M830.5 0V579" stroke="#fff" strokeDasharray="5 3" />
    <g strokeWidth="1.7">
      <path d={wicks(fallA, 4)} stroke={RED} />
      <path d={wicks(riseA, 4)} stroke={GREEN} />
      <path d={wicks(fallB, 5)} stroke={RED} />
      <path d={wicks(spike, 13)} stroke={RED} />
      <path d={wicks(calm, 5)} stroke={RED} />
      <path d={wicks(riseB, 5)} stroke={GREEN} />
      <path d={wicks(fallC, 8)} stroke={RED} />
    </g>
    <polyline points="0 160 38 161" stroke="#ff0000" />
    <polyline points="38 161 90 160 143 160" stroke="#32cd32" />
    <polyline points={averageDown} stroke="#ff0000" />
    <polyline points="919 422 957 421 1004 419 1051 417 1099 413 1132 411 1160 411" stroke="#32cd32" />
    <polyline points="1160 411 1179 412 1191 415 1197 419" stroke="#ff0000" />
    <polyline points={upperBand} stroke="#909090" strokeDasharray="4 3" />
    <polyline points={lowerBand} stroke="#909090" strokeDasharray="4 3" />
    <polyline points={fastLine} stroke="#d8d8d8" strokeDasharray="3 3" />
    <g shapeRendering="crispEdges">
      <path d="M0 430.5H1499" stroke="#ff2a00" strokeDasharray="9 6 3 6" />
      <path d="M0 429.5H1499" stroke="#32cd32" strokeDasharray="9 6 3 6" />
      <path d="M0 509.5H1499" stroke="#778899" />
    </g>
    <path d="M1192 1h10l-5 5z" fill="#778899" />
    <Arrow x={38} y={173} />
    <Arrow x={144} y={141} down />
    <Arrow x={920} y={441} />
    <Arrow x={1160} y={410} down />
  </svg>
);

const Tool = ({ name, label, w, on, caret, text, disabled }) => (
  <ToolButton type="button" aria-label={label ?? name} $w={w} $on={on} disabled={disabled}>
    {icons[name]}
    {text}
    {caret && <Caret />}
  </ToolButton>
);

const Tabs = ({ items, active, wide, ...rest }) => (
  <TabStrip role="tablist" {...rest}>
    {items.map(([text, count], i) => (
      <Tab key={i} type="button" role="tab" aria-selected={i === active} $active={i === active} $wide={wide}>
        {text}
        {count && <sub>{count}</sub>}
      </Tab>
    ))}
  </TabStrip>
);

const Caption = ({ children }) => (
  <PanelCaption>
    <span>{children}</span>
    <button type="button" aria-label="Close">
      <WinIcon d="M3 3l8 8M11 3l-8 8" />
    </button>
  </PanelCaption>
);

const Header = () => (
  <>
    <TitleBar>
      <Title>100230469: AUSForex-Demo - 模拟帐户 - AUS Commercial Limited - [XAUUSD,M1]</Title>
      <WindowButtons>
        <button type="button" aria-label="Minimize"><WinIcon d="M1 7.5h12" /></button>
        <button type="button" aria-label="Maximize"><WinIcon d="M1.5 1.5h11v11h-11z" /></button>
        <button type="button" aria-label="Close"><WinIcon d="M1 1l12 12M13 1L1 13" /></button>
      </WindowButtons>
    </TitleBar>
    <MenuBar>
      {["文件(F)", "显示(V)", "插入(I)", "图表(C)", "工具(T)", "窗口(W)", "帮助(H)"].map((m) => (
        <MenuItem key={m} type="button">{m}</MenuItem>
      ))}
      <MdiButtons>
        <button type="button" aria-label="Minimize chart"><WinIcon d="M4 10h6M4 11h6" /></button>
        <button type="button" aria-label="Restore chart"><WinIcon d="M3 6h6v5H3zM3 7h6M6 6V3h6v5H9M6 4h6" /></button>
        <button type="button" aria-label="Close chart"><WinIcon d="M3 4l6 6M4 4l6 6M10 4l-6 6M9 4l-6 6" /></button>
      </MdiButtons>
    </MenuBar>
  </>
);

const Toolbars = () => (
  <>
    <ToolRow>
      <ToolGroups>
        <ToolGroup $underline $start={48}>
          <Tool name="profiles" w={43} caret />
          <Separator />
          <Tool name="market" on />
          <Tool name="target" />
          <Tool name="navigator" on />
          <Tool name="terminal" on />
          <Tool name="tester" />
          <Separator />
          <Tool name="order" text="新订单" label="新订单" w={80} disabled />
          <Tool name="book" />
          <Tool name="cloud" />
          <Tool name="signal" />
          <Tool name="expert" text="自动交易" label="自动交易" w={96} on />
        </ToolGroup>
        <ToolGroup $underline $start={4}>
          <Grip />
          <Tool name="bars" />
          <Tool name="candles" on />
          <Tool name="line" />
          <Separator />
          <Tool name="zoomIn" />
          <Tool name="zoomOut" disabled />
          <Tool name="tiles" />
          <Separator />
          <Tool name="scroll" on />
          <Tool name="shift" on />
          <Separator />
          <Tool name="indicator" w={44} caret />
          <Tool name="clock" w={44} caret />
          <Tool name="template" w={44} caret />
        </ToolGroup>
      </ToolGroups>
      <ToolRight>
        <button type="button" aria-label="Search">{icons.search}</button>
        <button type="button" aria-label="Messages">
          {icons.chat}
          <Badge>1</Badge>
        </button>
      </ToolRight>
    </ToolRow>
    <ToolRow>
      <ToolGroups>
        <ToolGroup $start={36}>
          <Tool name="cross" />
          <Separator />
          {["vline", "hline", "trend", "channel", "fibo", "letter", "label"].map((n) => (
            <Tool key={n} name={n} />
          ))}
          <Tool name="arrows" w={44} caret />
        </ToolGroup>
        <ToolGroup $start={3}>
          <Grip />
          {["M1", "M5", "M15", "M30", "H1", "H4", "D1", "W1", "MN"].map((p, i) => (
            <PeriodButton key={p} type="button" $on={i === 0}>{p}</PeriodButton>
          ))}
        </ToolGroup>
      </ToolGroups>
    </ToolRow>
  </>
);

const MarketWatch = () => (
  <Panel>
    <Caption>市场报价: 06:07:02</Caption>
    <QuoteList>
      <QuoteTable>
        <colgroup>
          <col width="116" />
          <col width="80" />
          <col width="79" />
          <col width="40" />
        </colgroup>
        <thead>
          <tr><th>交易品种</th><th>卖价</th><th>买价</th><th>!</th></tr>
        </thead>
        <tbody>
          {quotes.map(([symbol, bid, ask, spread, up]) => (
            <QuoteRow key={symbol} $up={up}>
              <td>{symbol}</td><td>{bid}</td><td>{ask}</td><td>{spread}</td>
            </QuoteRow>
          ))}
        </tbody>
      </QuoteTable>
      <ScrollTrack />
    </QuoteList>
    <Tabs items={[["交易品种"], ["即时图"]]} active={0} />
  </Panel>
);

const Navigator = () => (
  <Panel $grow>
    <Caption> </Caption>
    <Tree>
      <TreeItem>Doo Prime MT4 Terminal</TreeItem>
      <TreeItem>{icons.folder}账户</TreeItem>
      <TreeItem $depth={1}>{icons.server}AUSForex-Demo</TreeItem>
      <TreeItem $depth={2}>{icons.user}100230469: yuzhen</TreeItem>
      <TreeItem>{icons.folder}技术指标</TreeItem>
      <TreeItem>{icons.folder}EA交易</TreeItem>
      <TreeItem>{icons.folder}脚本</TreeItem>
    </Tree>
    <Tabs items={[["常用"], ["收藏夹"]]} active={0} />
  </Panel>
);

const Chart = () => (
  <ChartColumn>
    <ChartArea>
      <Plot>
        <ChartDrawing />
        <OhlcLabel>XAUUSD,M1  2490.01 2490.01 2489.66 2489.70</OhlcLabel>
        <ExpertLabel>明真X7趋势EA<Smile size={15} strokeWidth={2} /></ExpertLabel>
        <OrderLabel><b>#242051185 s</b>ell 0.30</OrderLabel>
        <Notes>{notes}</Notes>
        <Signals>
          <p>Below Support</p>
          <p>Support Or Resistance</p>
          <p>Check MA Cross</p>
        </Signals>
      </Plot>
      <PriceAxis>
        {prices.map((p) => <Price key={p}>{p}</Price>)}
        <PriceNow><span>2489.70</span></PriceNow>
        <Price>2485.50</Price>
      </PriceAxis>
      <TimeAxis>
        {times.map((t) => <Time key={t}>{t}</Time>)}
      </TimeAxis>
    </ChartArea>
    <ChartTabs>
      <Tabs items={chartTabs.map((t) => [t])} active={6} wide $start={6} $double />
      <TabScroll><span>◀</span><span>▶</span></TabScroll>
    </ChartTabs>
  </ChartColumn>
);

const Orders = () => (
  <Terminal>
    <OrderArea>
      <OrderTable>
        <colgroup>
          {columns.map(([, w], i) => <col key={i} width={w} />)}
        </colgroup>
        <thead>
          <tr>{columns.map(([text], i) => <th key={i}>{text}</th>)}</tr>
        </thead>
        <tbody>
          <tr>
            <td>242051185</td><td>2024.09.09 05:32:03</td><td>sell</td><td>0.30</td><td>xauusd</td>
            <td>2496.31</td><td>2496.21</td><td>0.00</td><td>2489.77</td><td>-3.00</td><td>0.00</td>
            <td>196.20</td><td>明真X7趋势EA 242051185</td>
          </tr>
          <BalanceRow>
            <td colSpan={11}>余额: 17 956.21 USD  净值: 18 149.41  已用预付款: 150.00  可用预付款: 17 999.41  预付款比例: 12099.61%</td>
            <td>193.20</td>
            <td />
          </BalanceRow>
          <tr>
            <td>241362474</td><td>2024.08.28 00:03:31</td><td>sell limit</td><td>0.01</td><td>xauusd</td>
            <td>6000.00</td><td>0.00</td><td>0.00</td><td>2489.70</td><td colSpan={3} /><td />
          </tr>
        </tbody>
      </OrderTable>
      <Redaction width="222" height="90" viewBox="0 0 222 90" aria-hidden="true">
        <path d="M112 3h110v31H112q-12-2-12-16t12-15z" fill="#dadcdb" />
        <path d="M122 3h45v16h-45z" fill="#ececee" />
        <path d="M167 19h55v15h-55z" fill="#dfdbda" />
        <path d="M181 1h20v5h-20z" fill="#d0d0d2" />
        <path d="M10 51q40-2 90 8 8-10 22-10h100v30H14q-16-14-4-28z" fill="#d8d8d8" />
        <path d="M18 63h30v15H18z" fill="#b4b0ae" />
        <path d="M48 63h15v15H48z" fill="#e6e7ea" />
        <path d="M63 63h30v15H63z" fill="#b9b6b5" />
        <path d="M93 63h15v15H93z" fill="#e8e9ec" />
        <path d="M108 63h114v15H108z" fill="#cdcdcd" />
        <path d="M10 79h212v11q-60 4-110-2T10 79z" fill="#fafafa" />
      </Redaction>
    </OrderArea>
    <Tabs items={terminalTabs} active={0} $start={14} />
  </Terminal>
);

const Traffic = () => (
  <svg width="32" height="20" viewBox="0 0 32 20" aria-hidden="true">
    {[...Array(8)].map((_, i) => (
      <React.Fragment key={i}>
        <path d={`M${i * 4} 6h3v${12 - i}h-3z`} fill="#6b7d10" />
        <path d={`M${i * 4} ${18 - i}h3V20h-3z`} fill="#0b3c68" />
      </React.Fragment>
    ))}
  </svg>
);

const Status = () => (
  <StatusBar>
    <StatusCell>帮助 请按F1键</StatusCell>
    <StatusCell $w={155}>Default</StatusCell>
    <StatusCell $w={144}>2024.09.06 15:05</StatusCell>
    <StatusCell $w={98}>O: 2513.83</StatusCell>
    <StatusCell $w={98}>H: 2515.66</StatusCell>
    <StatusCell $w={190} $end>C: 2514.15</StatusCell>
    <StatusCell $w={91}>V: 506</StatusCell>
    <StatusCell $w={187}><Traffic />1092/6 kb</StatusCell>
  </StatusBar>
);

const SystemBar = () => (
  <Taskbar>
    <AppList>
      {apps.map((a) => (
        <AppButton key={a.name} type="button" aria-label={a.name} $active={a.active} $running={a.running}>
          {a.icon}
        </AppButton>
      ))}
    </AppList>
    <Tray>
      <TrayButton type="button" aria-label="Show hidden icons" $w={38}><ChevronUp size={18} /></TrayButton>
      <TrayButton type="button" aria-label="Security" $w={42}>
        <svg width="20" height="20" viewBox="0 0 20 20" fill="none">
          <circle cx="10" cy="10" r="9" fill="#ffd82e" />
          <path d="M4 4a8 8 0 0112 0M16 16a8 8 0 01-12 0" stroke="#12a048" strokeWidth="3" />
          <path d="M10 7v6M7 10h6" stroke="#128a40" strokeWidth="2" />
        </svg>
      </TrayButton>
      <TrayButton type="button" $w={40}>中</TrayButton>
      <TrayButton type="button" aria-label="Input method" $w={54}>
        <svg width="20" height="20" viewBox="0 0 20 20" fill="none">
          <path d="M2 4l16-3-1 14-15 4z" fill="#f4581c" />
          <path d="M14 5c-8 0-10 3-4 4.500S13 14 5 15" stroke="#fff" strokeWidth="2.5" />
        </svg>
      </TrayButton>
      <TrayButton type="button" aria-label="Network" $w={36}><Wifi size={20} /></TrayButton>
      <TrayButton type="button" aria-label="Volume" $w={24}><Volume2 size={18} strokeWidth={1.5} /></TrayButton>
      <TrayButton type="button" aria-label="Battery" $w={38}>
        <svg width="22" height="20" viewBox="0 0 22 20" fill="none">
          <rect x="5" y="5" width="13" height="10" rx="2" stroke="#222" strokeWidth="2" />
          <path d="M8 8h7l-3 5H8z" fill="#222" />
          <path d="M19 8h2v4h-2z" fill="#222" />
          <path d="M4 1l-2 5h3l-2 5" stroke="#222" strokeWidth="1.5" />
          <path d="M2 12h4v4H2z" fill="#222" />
          <path d="M17 19c-6-4-4-8 0-5 4-3 6 1 0 5z" fill="#111" />
        </svg>
      </TrayButton>
      <Clock>
        <div>14:07 周一</div>
        <div>2024/9/9</div>
      </Clock>
      <TrayButton type="button" aria-label="Notifications" $w={20}>
        <svg width="18" height="20" viewBox="0 0 18 20" fill="#174e5e">
          <path d="M9 1c4 0 6 3 6 6v5l2 4H1l2-4V7c0-3 2-6 6-6zM6 17h6c-1 3-5 3-6 0z" />
        </svg>
      </TrayButton>
    </Tray>
  </Taskbar>
);

const App = () => (
  <>
    <GlobalStyle />
    <Desktop>
      <Window>
        <Header />
        <Toolbars />
        <Workspace>
          <Sidebar>
            <MarketWatch />
            <PanelDivider />
            <Navigator />
          </Sidebar>
          <Chart />
        </Workspace>
        <Orders />
        <Status />
      </Window>
      <SystemBar />
      <Watermark aria-hidden="true">
        <defs>
          <pattern id="mark" x="40" y="50" width="250" height="250" patternUnits="userSpaceOnUse">
            <text
              transform="translate(19 130) rotate(-33)"
              fontFamily="Liberation Sans, sans-serif"
              fontSize="36"
              fontWeight="700"
              fill="#fff"
              fillOpacity=".12"
              stroke="#000"
              strokeOpacity=".2"
              strokeWidth="1.2"
            >
              EAHub.cn
            </text>
          </pattern>
        </defs>
        <rect width="100%" height="100%" fill="url(#mark)" />
      </Watermark>
    </Desktop>
  </>
);

export default App;
